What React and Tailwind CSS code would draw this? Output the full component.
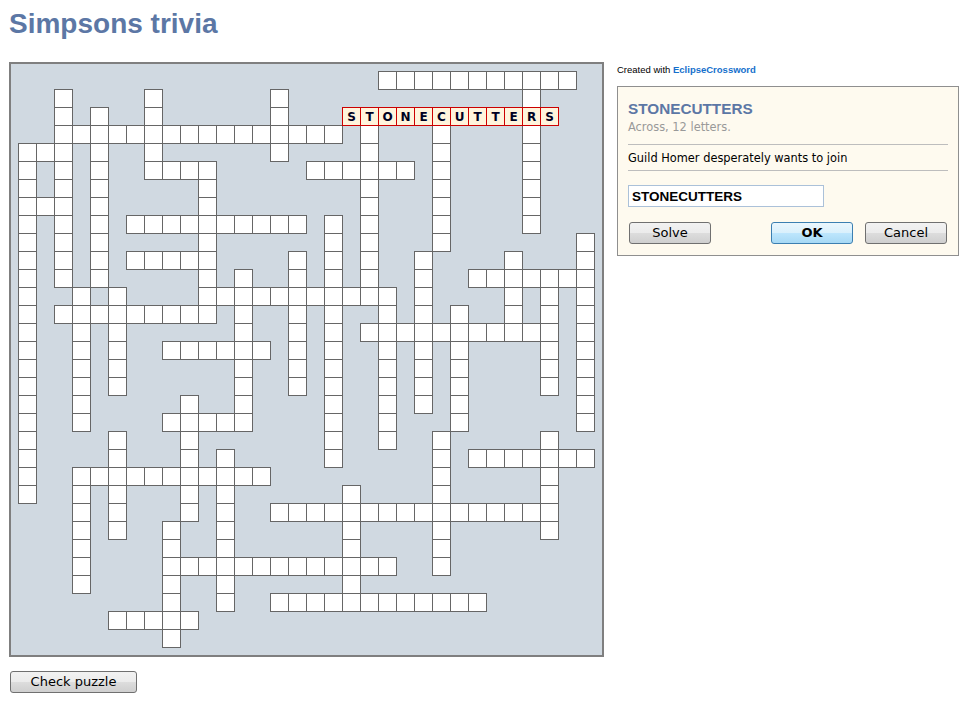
import React from 'react';

// across: [row, startCol, length]
const ACROSS = [
  [0, 20, 11], [2, 18, 12], [3, 2, 16], [4, 0, 3], [5, 7, 4], [5, 16, 6],
  [7, 0, 3], [8, 6, 10], [10, 6, 5], [11, 25, 7], [12, 10, 11], [13, 2, 9],
  [14, 19, 11], [15, 8, 6], [19, 8, 5], [21, 25, 7], [22, 3, 11], [24, 14, 16],
  [27, 8, 13], [29, 14, 12], [30, 5, 5],
];

// down: [col, startRow, endRow]
const DOWN = [
  [0, 4, 23], [2, 1, 11], [3, 12, 19], [3, 22, 28], [4, 2, 11], [5, 12, 17],
  [5, 20, 25], [7, 1, 5], [8, 25, 31], [9, 18, 24], [10, 5, 13], [11, 21, 29],
  [12, 11, 19], [14, 1, 4], [15, 10, 17], [17, 8, 21], [18, 23, 29], [19, 2, 12],
  [20, 12, 20], [22, 10, 18], [23, 2, 9], [23, 20, 27], [24, 13, 19], [27, 10, 14],
  [28, 0, 8], [29, 12, 17], [29, 20, 25], [31, 9, 19],
];

const ACTIVE = { row: 2, col: 18, word: 'STONECUTTERS' };

function buildCells() {
  const set = new Set();
  ACROSS.forEach(([r, c, n]) => {
    for (let i = 0; i < n; i++) set.add(`${r}-${c + i}`);
  });
  DOWN.forEach(([c, r0, r1]) => {
    for (let r = r0; r <= r1; r++) set.add(`${r}-${c}`);
  });
  const active = new Set();
  for (let i = 0; i < ACTIVE.word.length; i++) active.add(`${ACTIVE.row}-${ACTIVE.col + i}`);
  const plain = [];
  set.forEach((k) => {
    if (!active.has(k)) plain.push(k.split('-').map(Number));
  });
  return plain;
}

function Board() {
  const cells = buildCells();
  return (
    <div className="w-[595px] h-[595px] shrink-0 border-2 border-[#7f7f7f] bg-[#d0d9e1] p-[7px]">
      <div className="grid grid-cols-[repeat(32,18px)] grid-rows-[repeat(32,18px)] w-[577px] h-[577px]">
        {cells.map(([r, c]) => (
          <div
            key={`${r}-${c}`}
            className="w-[19px] h-[19px] border border-[#666666] bg-white"
            style={{ gridRow: r + 1, gridColumn: c + 1 }}
          />
        ))}
        {ACTIVE.word.split('').map((ch, i) => (
          <div
            key={`a${i}`}
            className="w-[19px] h-[19px] border border-[#cc0000] bg-[#fff4dc] flex items-center justify-center text-[12px] font-bold text-[#000022] font-['DejaVu_Sans',sans-serif]"
            style={{ gridRow: ACTIVE.row + 1, gridColumn: ACTIVE.col + i + 1 }}
          >
            {ch}
          </div>
        ))}
      </div>
    </div>
  );
}

const grayBtn =
  'h-[22px] w-[82px] rounded-[3px] border border-[#707070] bg-[linear-gradient(#f2f2f2_0%,#ebebeb_50%,#dddddd_50%,#cfcfcf_100%)] text-[13px] text-black';

function CluePanel() {
  return (
    <div className="w-[342px] border border-[#8f8f8f] bg-[#fefaef] px-[10px] pt-[13px] pb-[11px]">
      <div className="text-[15.3px] leading-[18px] font-bold text-[#5c77a5] font-['Liberation_Sans',sans-serif]">
        STONECUTTERS
      </div>
      <div className="mt-[2px] text-[11.4px] leading-[14px] text-[#999999]">Across, 12 letters.</div>
      <div className="mt-[10px] h-px bg-[#bdbdbd]" />
      <div className="pt-[6px] pb-[5px] text-[11.4px] leading-[14px] text-black">
        Guild Homer desperately wants to join
      </div>
      <div className="h-px bg-[#bdbdbd]" />
      <input
        readOnly
        value="STONECUTTERS"
        className="mt-[14px] block w-[196px] h-[22px] border border-[#abc1d9] bg-white px-[3px] text-[13.5px] font-bold text-black font-['Liberation_Sans',sans-serif] outline-none"
      />
      <div className="mt-[15px] flex">
        <button className={`ml-[1px] ${grayBtn}`}>Solve</button>
        <div className="flex-1" />
        <button className="h-[22px] w-[82px] rounded-[3px] border border-[#3c7fb1] bg-[linear-gradient(#eaf6fd_0%,#d9f0fc_50%,#bee6fd_50%,#a7d9f5_100%)] text-[13px] font-bold text-black">
          OK
        </button>
        <button className={`ml-[12px] mr-[1px] ${grayBtn}`}>Cancel</button>
      </div>
    </div>
  );
}

export default function App() {
  return (
    <div className="min-h-screen bg-white pl-[9px] pt-[8px] font-['DejaVu_Sans',sans-serif]">
      <h1 className="text-[28px] leading-[32px] font-bold text-[#5c77a5] font-['Liberation_Sans',sans-serif]">
        Simpsons trivia
      </h1>

      <div className="mt-[22px] flex items-start">
        <Board />
        <div className="ml-[13px]">
          <div className="pt-[2px] text-[9.5px] leading-[12px] font-['Liberation_Sans',sans-serif] text-black">
            Created with <span className="font-bold text-[#1570cc]">EclipseCrossword</span>
          </div>
          <div className="mt-[10px]">
            <CluePanel />
          </div>
        </div>
      </div>

      <button className="mt-[14px] ml-[1px] h-[22px] w-[127px] rounded-[3px] border border-[#707070] bg-[linear-gradient(#f2f2f2_0%,#ebebeb_50%,#dddddd_50%,#cfcfcf_100%)] text-[13px] text-black">
        Check puzzle
      </button>
    </div>
  );
}
